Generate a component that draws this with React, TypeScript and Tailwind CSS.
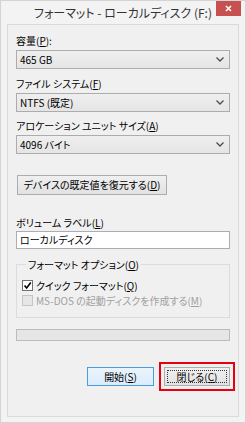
import { ReactNode } from 'react';

const font = "font-['Noto_Sans_CJK_JP','Noto_Sans',sans-serif] [font-feature-settings:'palt']";

function Key({ children }: { children: ReactNode }) {
  return <span className="underline underline-offset-[1px]">{children}</span>;
}

function Chevron() {
  return (
    <svg width="8" height="5" viewBox="0 0 8 5" className="shrink-0">
      <path d="M0.5 0.5 L4 4 L7.5 0.5" fill="none" stroke="#4d4d4d" strokeWidth="1.3" />
    </svg>
  );
}

function Combo({ value }: { value: string }) {
  return (
    <div className="mt-[2px] h-[19px] flex items-center justify-between border border-[#acacac] bg-gradient-to-b from-[#efefef] to-[#e5e5e5] pl-[3px] pr-[5px] text-[10px] leading-none text-black">
      <span>{value}</span>
      <Chevron />
    </div>
  );
}

function Label({ children, className = '' }: { children: ReactNode; className?: string }) {
  return <div className={`h-[15px] text-[10px] leading-[15px] text-black ${className}`}>{children}</div>;
}

export default function App() {
  return (
    <div className={`w-[246px] h-[423px] overflow-hidden flex flex-col bg-[#f3f3f3] border border-[#d4d4d4] ${font}`}>
      {/* タイトルバー */}
      <div className="h-[23px] grid grid-cols-[30px_1fr_30px] items-start">
        <div />
        <div className="pt-[4px] text-center text-[12px] leading-[15px] text-[#333] whitespace-nowrap">
          フォーマット - ローカルディスク (F:)
        </div>
        <div className="flex justify-end pr-[4px]">
          <div className="w-[25px] h-[15px] bg-[#c75050] flex items-center justify-center">
            <svg width="7" height="7" viewBox="0 0 7 7">
              <path d="M1 1 L6 6 M6 1 L1 6" stroke="#fff" strokeWidth="1.6" />
            </svg>
          </div>
        </div>
      </div>

      {/* クライアント領域 */}
      <div className="flex-1 mx-[6px] mb-[5px] border border-[#dadada] bg-[#f0f0f0] px-[8px] flex flex-col">
        <Label className="mt-[8px]">容量(<Key>P</Key>):</Label>
        <Combo value="465 GB" />

        <Label className="mt-[7px]">ファイル システム(<Key>F</Key>)</Label>
        <Combo value="NTFS (既定)" />

        <Label className="mt-[6px]">アロケーション ユニット サイズ(<Key>A</Key>)</Label>
        <Combo value="4096 バイト" />

        <button className="mt-[21px] ml-[1px] w-[150px] h-[20px] border border-[#adadad] bg-gradient-to-b from-[#f0f0f0] to-[#e2e2e2] text-[10px] leading-none text-black flex items-center justify-center">
          デバイスの既定値を復元する(<Key>D</Key>)
        </button>

        <Label className="mt-[20px]">ボリューム ラベル(<Key>L</Key>)</Label>
        <div className="mt-[1px] h-[18px] border border-[#abadb3] bg-white flex items-center pl-[3px] text-[10px] leading-none text-black">
          ローカルディスク
        </div>

        <fieldset className="mt-[8px] border border-[#dcdcdc] pl-[5px] pb-[9px]">
          <legend className="ml-[4px] px-[2px] h-[15px] text-[10px] leading-[15px] text-black">
            フォーマット オプション(<Key>O</Key>)
          </legend>
          <div className="mt-[6px] h-[15px] flex items-center gap-[3px] text-[10px] leading-none text-black">
            <div className="w-[11px] h-[11px] border border-[#707070] bg-white flex items-center justify-center">
              <svg width="9" height="9" viewBox="0 0 9 9">
                <path d="M1.5 4.5 L3.6 7 L7.8 1.5" fill="none" stroke="#000" strokeWidth="1.6" />
              </svg>
            </div>
            <span>クイック フォーマット(<Key>Q</Key>)</span>
          </div>
          <div className="h-[15px] flex items-center gap-[3px] text-[10px] leading-none text-[#a0a0a0]">
            <div className="w-[11px] h-[11px] border border-[#c5c5c5] bg-[#e6e6e6]" />
            <span>MS-DOS の起動ディスクを作成する(<Key>M</Key>)</span>
          </div>
        </fieldset>

        <div className="mt-[11px] h-[12px] border border-[#bcbcbc] bg-[#e6e6e6]" />

        <div className="mt-[26px] flex justify-end gap-[10px]">
          <button className="w-[67px] h-[19px] border border-[#4a9ce0] bg-gradient-to-b from-[#eaf4fc] to-[#dcecfc] text-[10px] leading-none text-black flex items-center justify-center">
            開始(<Key>S</Key>)
          </button>
          <button className="relative w-[66px] h-[19px] border border-[#adadad] bg-gradient-to-b from-[#f0f0f0] to-[#e2e2e2] text-[10px] leading-none text-black flex items-center justify-center">
            <span className="absolute inset-[2px] border border-dotted border-[#333]" />
            <span className="absolute -inset-[6px] border-2 border-[#e60012]" />
            閉じる(<Key>C</Key>)
          </button>
        </div>
      </div>
    </div>
  );
}
